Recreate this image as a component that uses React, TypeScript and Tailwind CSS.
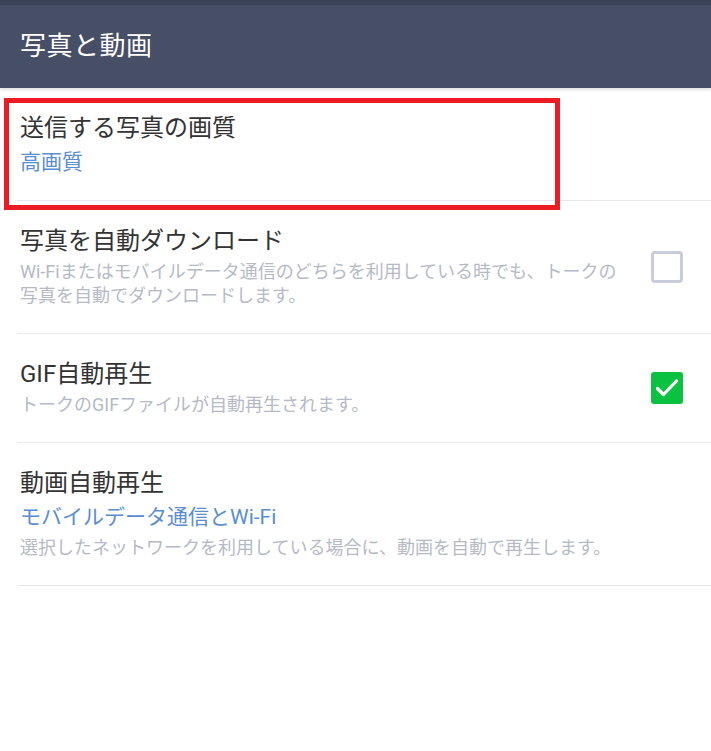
import { ReactNode } from "react";

const font = "font-['Roboto','Noto_Sans_CJK_JP',sans-serif]";

function Checkbox({ checked }: { checked: boolean }) {
  if (checked) {
    return (
      <div className="w-8 h-8 rounded-[3px] bg-[#0bc142] shrink-0">
        <svg width="32" height="32" viewBox="0 0 32 32" fill="none">
          <path
            d="M6.5 16.5 L12.5 22.5 L25.5 9"
            stroke="white"
            strokeWidth="3.2"
            strokeLinecap="round"
            strokeLinejoin="round"
          />
        </svg>
      </div>
    );
  }
  return (
    <div className="w-8 h-8 rounded-[4px] border-[3px] border-[#c9ccda] bg-white shrink-0" />
  );
}

function SettingRow({
  title,
  value,
  desc,
  checkbox,
  tight,
}: {
  title: string;
  value?: string;
  desc?: ReactNode;
  checkbox?: boolean;
  tight?: boolean;
}) {
  return (
    <div
      className={`ml-[17px] border-b border-[#e8e8ea] flex items-center pt-[25px] pl-[3px] pr-[28px] ${
        tight ? "pb-[23px]" : "pb-[25px]"
      }`}
    >
      <div className="flex-1">
        <div className="text-[24px] leading-[30px] text-[#333333]">{title}</div>
        {value && (
          <div className="mt-[4px] text-[21px] leading-[30px] text-[#5b8dd1]">{value}</div>
        )}
        {desc && (
          <div className="mt-[4px] text-[18px] leading-[24px] text-[#b5bac6] whitespace-nowrap">
            {desc}
          </div>
        )}
      </div>
      {checkbox !== undefined && <Checkbox checked={checkbox} />}
    </div>
  );
}

export default function App() {
  return (
    <div className={`${font} w-[711px] h-[751px] bg-white relative overflow-hidden`}>
      <div className="h-[5px] bg-[#3d4356]" />
      <div className="h-[83px] bg-[#474f66] flex items-center pl-[20px] shadow-[0_2px_3px_rgba(0,0,0,0.12)] relative z-10">
        <span className="text-[26px] text-white tracking-[0.5px]">写真と動画</span>
      </div>

      <SettingRow title="送信する写真の画質" value="高画質" tight />
      <SettingRow
        title="写真を自動ダウンロード"
        desc={
          <>
            Wi-Fiまたはモバイルデータ通信のどちらを利用している時でも、トークの
            <br />
            写真を自動でダウンロードします。
          </>
        }
        checkbox={false}
      />
      <SettingRow
        title="GIF自動再生"
        desc="トークのGIFファイルが自動再生されます。"
        checkbox={true}
      />
      <SettingRow
        title="動画自動再生"
        value="モバイルデータ通信とWi-Fi"
        desc="選択したネットワークを利用している場合に、動画を自動で再生します。"
      />

      {/* highlight annotation */}
      <div className="absolute left-[4px] top-[98px] w-[556px] h-[112px] border-[5px] border-[#ed1c24] pointer-events-none" />
    </div>
  );
}
